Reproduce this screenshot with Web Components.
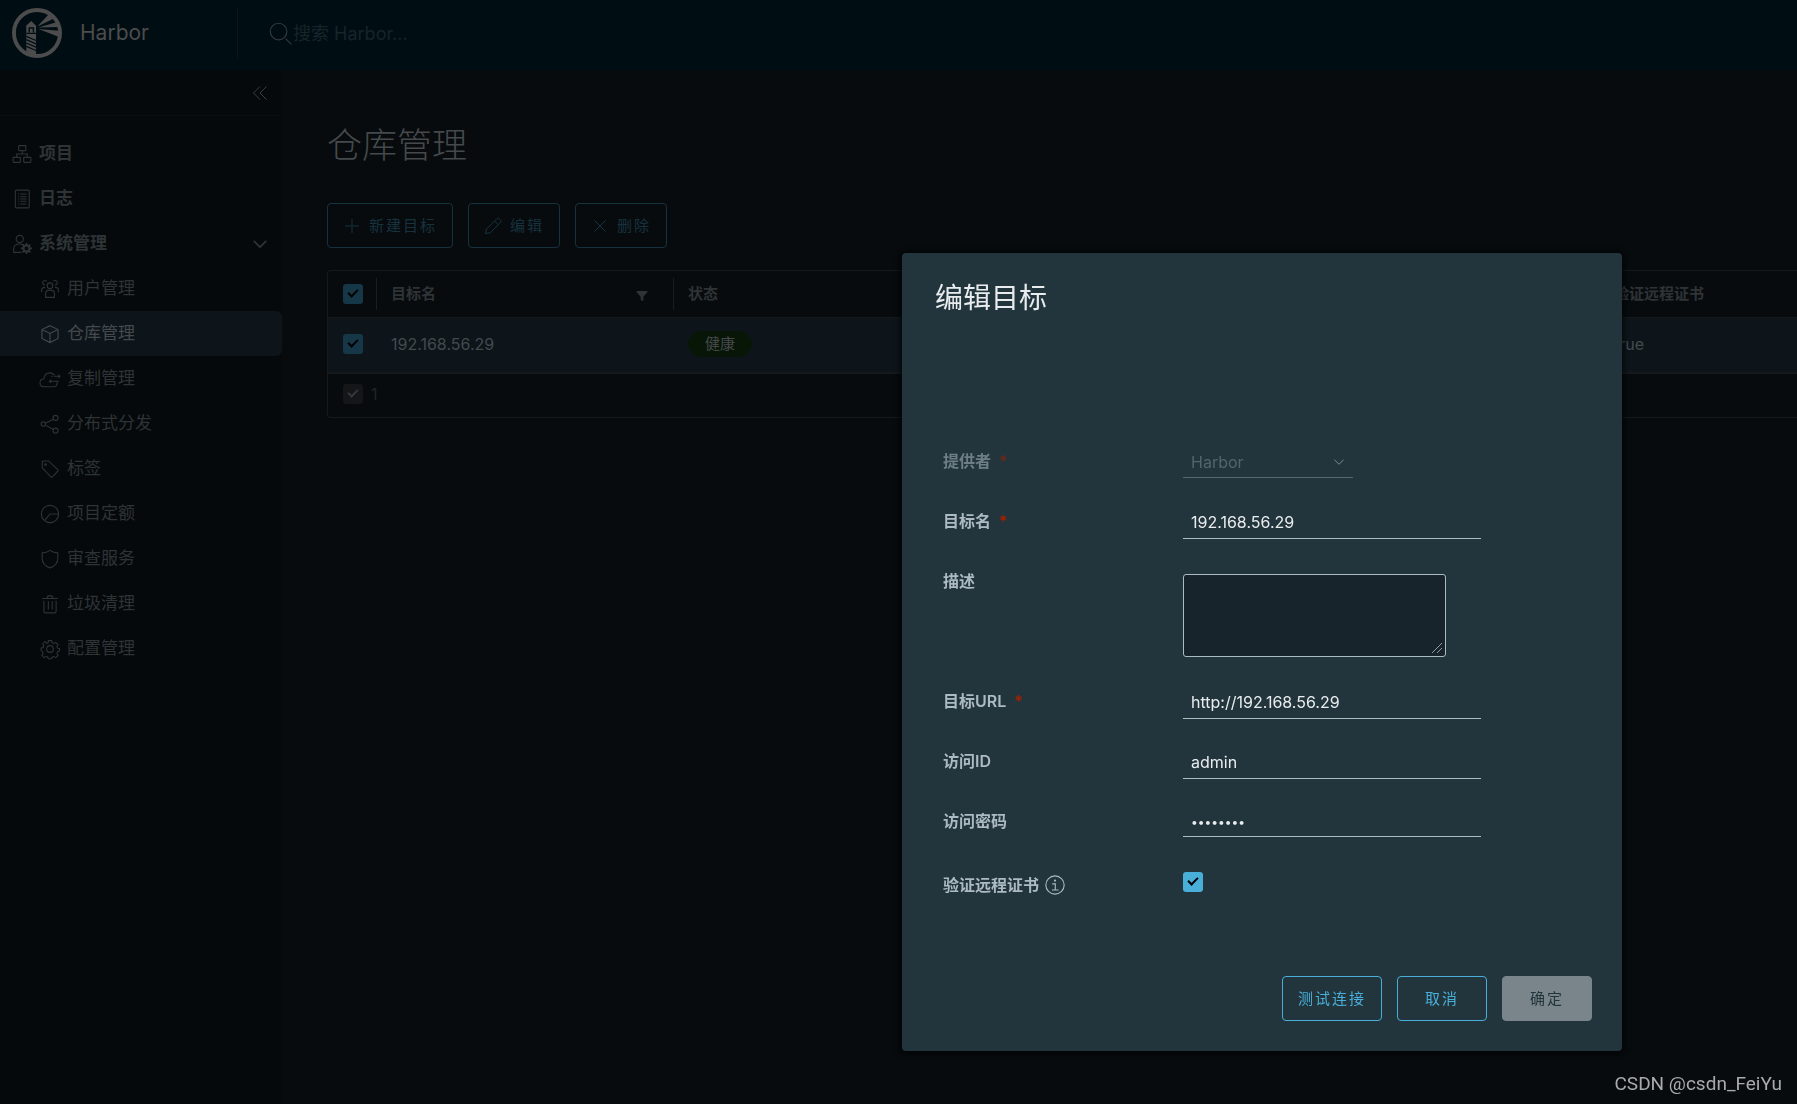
<!DOCTYPE html>
<html lang="zh-CN">
<head>
<meta charset="utf-8">
<title>Harbor</title>
<style>
  html, body { margin: 0; height: 100%; }
  body {
    background: #070b0d;
    color: #45494c;
    font: 400 16px/24px Inter, "Noto Sans CJK SC", sans-serif;
    overflow: hidden;
  }
</style>
</head>
<body>
<harbor-app></harbor-app>
<script>
const ICONS = {
  project: '<rect x="12" y="3" width="13" height="9" rx="1"/><rect x="2" y="24" width="13" height="9" rx="1"/><rect x="21" y="24" width="13" height="9" rx="1"/><path d="M18.500 12v6M8.500 24v-6h19v6"/>',
  log: '<rect x="6" y="2" width="25" height="32" rx="2"/><path d="M11 9h2M15 9h11M11 14h2M15 14h11M11 18h2M15 18h11M11 22h2M15 22h11M11 27h2M15 27h11"/>',
  admin: '<circle cx="14" cy="9" r="6.500"/><path d="M17 33H3v-6c0-6 5-9 11-9 3 0 5 .6 7 1.700"/><circle cx="26" cy="26" r="5.500" stroke-width="4"/><path d="M26 16v4M26 32v4M16 26h4M32 26h4M19 19l3 3M30 30l3 3M33 19l-3 3M19 33l3-3" stroke-width="3"/>',
  users: '<circle cx="18" cy="12" r="5"/><path d="M10 33V26c0-5 3-6 8-6s8 1 8 6v7zM12 4c-4-3-8 0-7 4 .4 2 2 3 4 3M24 4c4-3 8 0 7 4-.4 2-2 3-4 3M3 24v-4c0-3 2-5 6-5M33 24v-4c0-3-2-5-6-5"/>',
  cube: '<path d="M18 3l14.500 7v16L18 33.500 3.500 26V10zM3.500 10L18 17l14.500-7M18 17v16"/>',
  cloud: '<path d="M30 22c1 2 1 4 .5 6-1 3-4 4-7 4H8c-5 0-8-3-8-7 0-5 4-7 7-7 0-7 5-11 10-11 4 0 7 1 9 4"/><path d="M20 13h3M25 13h11M33 10l3 3-3 3M34 22H17M20 19l-3 3 3 3"/>',
  share: '<circle cx="6" cy="18" r="4"/><circle cx="28" cy="7" r="4.500"/><circle cx="28" cy="30" r="4.500"/><path d="M10 16.500L24 9.500M10 20l14 8"/>',
  tag: '<path d="M4 5c0-1 .5-1.500 1.500-1.500h10L32 19c1 1 1 2 0 3L22.500 32c-1 1-2 1-3 0L4 16z"/><circle cx="10" cy="10" r="1.500"/>',
  quota: '<circle cx="18" cy="18" r="15.500"/><path d="M8 30L18 18h15.500"/>',
  shield: '<path d="M18 2.500c4 3 9 4.500 14 4.500v10c0 8-6 14-14 17C10 31 4 25 4 17V7c5 0 10-1.500 14-4.500z"/>',
  trash: '<path d="M4 8h28M13 7c0-3 1-4 5-4s5 1 5 4M7 12v19c0 2 1 3 3 3h16c2 0 3-1 3-3V12M15 13v15M22 13v15"/>',
  gear: '<circle cx="18" cy="18" r="6"/><path d="M15 3h6l1 4 3 1 3.500-2 4 4-2 3.500 1 3 3.500 1v4l-3.500 1.500-1 3 2 3.500-4 4-3.500-2-3 1-1 3h-6l-1-3-3-1-3.500 2-4-4 2-3.500-1-3L2 20.500v-4l4-1.500 1-3-2-3.500 4-4L12.500 8l2-1z"/>',
  plus: '<path d="M18 4v28M4 18h28"/>',
  pencil: '<path d="M3 33l2-9L25 4c2-2 4-2 6 0l1.500 1.500c2 2 2 4 0 6L12.500 31.500zM21 8l7.500 7.500"/>',
  close: '<path d="M7 7l22 22M29 7L7 29"/>',
  search: '<circle cx="15" cy="15" r="13"/><path d="M26 26l9 9"/>',
  collapse: '<path d="M18 5L5 18l13 13M31 5L18 18l13 13"/>',
  chevron: '<path d="M4 11l14 14 14-14"/>',
  filter: '<path d="M2 3h32v4L22 20v14l-8-4V20L2 7z" fill="currentColor" stroke="none"/>',
  info: '<circle cx="18" cy="18" r="16.500"/><path d="M13 16h5.500v11M12.500 27h12"/><circle cx="18" cy="10" r="1" />',
  logo: '<circle cx="18" cy="18" r="16.600" stroke-width="2.800"/><g fill="currentColor" stroke="none"><path d="M9.800 13.200L13.800 9.400l3.900 3.800h-.4v4.800h-7v-4.800zM10.300 18h7V34l-7-1.800z"/><path d="M18.300 13.300L26.600 4.300l3.200 3.400zM19 14L32.600 10l1 3.700zM19 15.200l14.800 1.200-.8 4.200z"/></g><path d="M12.400 17.600v-3.200h3v3.200" stroke="#000e14" stroke-width="1"/><path d="M10.300 20.400l7 3M10.300 22.800l7 3M10.300 25.200l7 3M10.300 27.600l7 3M10.300 18.300h7" stroke="#000e14" stroke-width=".9"/>'
};

function define(name, html, setup) {
  const tpl = document.createElement('template');
  tpl.innerHTML = html;
  customElements.define(name, class extends HTMLElement {
    constructor() {
      super();
      this.attachShadow({ mode: 'open' });
    }
    connectedCallback() {
      if (this.shadowRoot.childNodes.length) return;
      const content = tpl.content.cloneNode(true);
      if (setup) setup(this, content);
      this.shadowRoot.append(content);
    }
  });
}

const CHECKBOX = `
  input[type=checkbox] {
    appearance: none; display: grid; place-content: center; flex: none; box-sizing: border-box;
    width: 20px; height: 20px; margin: 0; border-radius: 3px; padding-bottom: 4px;
    background: var(--check-bg, #163747);
  }
  input[type=checkbox]::before {
    content: ""; width: 4px; height: 8px; rotate: 45deg;
    border: solid var(--check-ink, #000); border-width: 0 2px 2px 0;
  }`;

define('h-icon', `
  <style>
    :host { display: block; flex: none; width: var(--size, 20px); height: var(--size, 20px); }
    svg { display: block; width: 100%; height: 100%; overflow: visible;
      fill: none; stroke: currentColor; stroke-width: var(--stroke, 2); }
  </style>
  <svg viewBox="0 0 36 36" aria-hidden="true"></svg>`,
  (el, root) => { root.querySelector('svg').innerHTML = ICONS[el.getAttribute('name')]; });

define('h-button', `
  <style>
    :host { display: block; }
    button {
      display: flex; align-items: center; justify-content: center; gap: 8px; box-sizing: border-box;
      height: 45px; min-width: 90px; padding: 0 15px; border: 1px solid var(--line, #17323f);
      border-radius: 4px; background: var(--fill, transparent); color: var(--ink, #17323f);
      font: inherit; font-size: 15px; letter-spacing: 2px; white-space: nowrap;
    }
    ::slotted(h-icon) { --size: 18px; }
  </style>
  <button type="button"><slot name="icon"></slot><slot></slot></button>`,
  (el, root) => { root.querySelector('button').disabled = el.hasAttribute('disabled'); });

define('app-header', `
  <style>
    :host { display: flex; align-items: center; height: 70px; background: #000e14; }
    .brand { display: flex; align-items: center; gap: 18px; box-sizing: border-box; width: 238px; height: 50px;
      margin-bottom: 4px; padding-left: 12px; border-right: 1px solid #061820;
      color: #4c4c4c; font-size: 21px; text-decoration: none; }
    .brand h-icon { --size: 50px; }
    label { display: flex; align-items: center; flex: 1; padding-left: 31px; color: #33393c; }
    label h-icon { --size: 23px; --stroke: 1.800; margin-bottom: 4px; }
    input { flex: 1; height: 30px; padding: 0; margin: 0 0 4px 1px; border: 0; outline: 0; background: none;
      font: inherit; font-size: 18px; color: #4c4c4c; }
    input::placeholder { color: #17242b; opacity: 1; }
  </style>
  <a class="brand" href="#"><h-icon name="logo"></h-icon><span>Harbor</span></a>
  <label><h-icon name="search"></h-icon><input type="text" placeholder="搜索 Harbor..."></label>`);

define('nav-item', `
  <style>
    :host { display: block; color: #2e3336; }
    a { display: flex; align-items: center; gap: 7px; height: 45px; padding: 0 14px 0 12px;
      border-radius: 0 6px 6px 0; color: inherit; font-size: 17px; text-decoration: none; }
    .text { padding-bottom: 2px; }
    :host([group]) a { font-weight: 700; }
    :host([sub]) a { padding-left: 40px; }
    :host([active]) { color: #45494c; }
    :host([active]) a { background: #0d151b; }
    ::slotted([slot=end]) { margin-left: auto; --size: 16px; --stroke: 4; }
  </style>
  <a href="#"><h-icon class="icon"></h-icon><span class="text"><slot></slot></span><slot name="end"></slot></a>`,
  (el, root) => { root.querySelector('h-icon').setAttribute('name', el.getAttribute('icon')); });

define('side-nav', `
  <style>
    :host { display: block; flex: none; width: 282px; background: #05090b; }
    .top { display: flex; justify-content: flex-end; align-items: center; height: 45px; padding-right: 13px;
      border-bottom: 1px solid #090d10; }
    button { padding: 0; border: 0; background: none; color: #3a3f42; }
    button h-icon { --size: 18px; }
    nav { padding-top: 15px; }
  </style>
  <div class="top"><button type="button" aria-label="collapse"><h-icon name="collapse"></h-icon></button></div>
  <nav>
    <nav-item group icon="project">项目</nav-item>
    <nav-item group icon="log">日志</nav-item>
    <nav-item group icon="admin">系统管理<h-icon slot="end" name="chevron"></h-icon></nav-item>
    <nav-item sub icon="users">用户管理</nav-item>
    <nav-item sub active icon="cube">仓库管理</nav-item>
    <nav-item sub icon="cloud">复制管理</nav-item>
    <nav-item sub icon="share">分布式分发</nav-item>
    <nav-item sub icon="tag">标签</nav-item>
    <nav-item sub icon="quota">项目定额</nav-item>
    <nav-item sub icon="shield">审查服务</nav-item>
    <nav-item sub icon="trash">垃圾清理</nav-item>
    <nav-item sub icon="gear">配置管理</nav-item>
  </nav>`);

define('registry-table', `
  <style>
    :host { display: block; border: 1px solid #15191b; border-right: 0; border-radius: 4px 0 0 4px; overflow: hidden; }
    table { width: 100%; table-layout: fixed; border-collapse: separate; border-spacing: 0; }
    th, td { box-sizing: border-box; padding: 0; text-align: left; vertical-align: middle; }
    th { height: 47px; font-size: 15px; font-weight: 600; color: #2e3336; border-bottom: 1px solid #15191b; }
    th > div { display: flex; align-items: center; justify-content: space-between; height: 32px;
      padding: 0 25px 0 14px; border-left: 1px solid #191d1f; }
    th:first-child > div { padding: 0 0 0 15px; border: 0; }
    th h-icon { --size: 12px; margin-top: 4px; }
    tbody td { height: 56px; padding: 0 0 2px 15px; background: #0d151b; border-bottom: 2px solid #15191b; }
    tfoot td { height: 43px; padding: 0 0 4px 15px; }
    .total { display: flex; align-items: center; gap: 8px; color: #202426;
      --check-bg: #141617; --check-ink: #33373a; }
    .badge { display: inline-block; padding: 0 17px; border-radius: 13px; background: #081607;
      font-size: 15px; line-height: 26px; }
    .pick { width: 48px; } .name { width: 297px; } .cert { width: 198px; }
    ${CHECKBOX}
  </style>
  <table>
    <colgroup><col class="pick"><col class="name"><col><col class="cert"></colgroup>
    <thead><tr>
      <th><div><input type="checkbox" checked aria-label="all"></div></th>
      <th><div>目标名<h-icon name="filter"></h-icon></div></th>
      <th><div>状态</div></th>
      <th><div>验证远程证书</div></th>
    </tr></thead>
    <tbody><tr>
      <td><input type="checkbox" checked aria-label="row"></td>
      <td>192.168.56.29</td>
      <td><span class="badge">健康</span></td>
      <td>true</td>
    </tr></tbody>
    <tfoot><tr><td colspan="4"><label class="total"><input type="checkbox" checked disabled>1</label></td></tr></tfoot>
  </table>`);

define('registry-page', `
  <style>
    :host { display: block; flex: 1; min-width: 0; padding: 50px 0 0 45px; }
    h1 { margin: 0; font-size: 35px; font-weight: 300; line-height: 50px; }
    .actions { display: flex; gap: 15px; margin: 33px 0 22px; }
  </style>
  <h1>仓库管理</h1>
  <div class="actions">
    <h-button><h-icon slot="icon" name="plus"></h-icon>新建目标</h-button>
    <h-button><h-icon slot="icon" name="pencil"></h-icon>编辑</h-button>
    <h-button><h-icon slot="icon" name="close"></h-icon>删除</h-button>
  </div>
  <registry-table></registry-table>`);

define('form-field', `
  <style>
    :host { display: grid; grid-template-columns: 240px 1fr; align-items: start; min-height: 33px; }
    label { display: flex; align-items: center; gap: 6px; line-height: 30px; font-weight: 600; color: #acbac3; }
    .star { color: #a32100; padding-left: 2px; }
    .control { display: flex; align-items: center; box-sizing: border-box; width: 298px; }
    input:not([type=checkbox]), select {
      appearance: none; box-sizing: border-box; width: 100%; height: 33px; padding: 0 8px; border: 0;
      border-bottom: 1px solid #acbac3; border-radius: 0; outline: 0; background: none;
      color: #e9ecef; font: inherit; opacity: 1;
    }
    input[type=password] { height: 31px; font-size: 12px; }
    textarea { box-sizing: border-box; width: 263px; height: 83px; margin: 8px 0 2px; border: 1px solid #acbac3;
      border-radius: 3px; background: #17242b; color: #e9ecef; }
    textarea::-webkit-resizer {
      background: linear-gradient(135deg, transparent 46%, #8d9aa2 46% 54%, transparent 54% 72%, #8d9aa2 72% 80%, transparent 80%) 2px 2px / 10px 10px no-repeat;
    }
    .control h-icon { --size: 12px; --stroke: 3; margin-left: -20px; color: #7d8a91; pointer-events: none; }
    :host([kind=select]) .control { width: 170px; }
    :host([kind=select]) label { opacity: .55; }
    :host([kind=select]) select { height: 32px; color: #55646c; border-color: #566770; }
    :host([kind=checkbox]) .control { padding-top: 2px; --check-bg: #49afd9; }
    ${CHECKBOX}
  </style>
  <label for="control"><span class="text"></span><slot></slot></label>
  <div class="control"></div>`,
  (el, root) => {
    const kind = el.getAttribute('kind') || 'text';
    const value = el.getAttribute('value') || '';
    root.querySelector('.text').textContent = el.getAttribute('label');
    if (el.hasAttribute('required')) {
      const star = document.createElement('span');
      star.className = 'star';
      star.textContent = '*';
      root.querySelector('label').append(star);
    }
    const box = root.querySelector('.control');
    let control;
    if (kind === 'select') {
      control = document.createElement('select');
      control.add(new Option(value));
      control.disabled = true;
    } else if (kind === 'textarea') {
      control = document.createElement('textarea');
    } else {
      control = document.createElement('input');
      control.type = kind;
      if (kind === 'checkbox') control.checked = true;
      else control.value = value;
    }
    control.id = 'control';
    box.append(control);
    if (kind === 'select') {
      const arrow = document.createElement('h-icon');
      arrow.setAttribute('name', 'chevron');
      box.append(arrow);
    }
  });

define('edit-dialog', `
  <style>
    :host { position: fixed; inset: 0; display: flex; justify-content: flex-end; align-items: flex-start;
      padding: 253px 175px 0 0; }
    section { box-sizing: border-box; width: 720px; padding: 30px; border-radius: 4px; background: #22343c;
      box-shadow: 0 1px 4px 3px rgba(0, 0, 0, .5); }
    h2 { margin: 0 3px; font-size: 28px; font-weight: 400; line-height: 30px; color: #e9ecef; }
    form { display: flex; flex-direction: column; gap: 27px; padding: 133px 11px 73px; }
    form-field:last-child { margin-top: 4px; }
    form-field h-icon { color: #acbac3; }
    footer { display: flex; justify-content: flex-end; gap: 15px; }
    h-button { --line: #49afd9; --ink: #49afd9; }
    h-button[disabled] { --line: #79858a; --fill: #79858a; --ink: #22343c; }
  </style>
  <section role="dialog" aria-labelledby="title">
    <h2 id="title">编辑目标</h2>
    <form>
      <form-field kind="select" label="提供者" value="Harbor" required></form-field>
      <form-field label="目标名" value="192.168.56.29" required></form-field>
      <form-field kind="textarea" label="描述"></form-field>
      <form-field label="目标URL" value="http://192.168.56.29" required></form-field>
      <form-field label="访问ID" value="admin"></form-field>
      <form-field kind="password" label="访问密码" value="Harbor12"></form-field>
      <form-field kind="checkbox" label="验证远程证书"><h-icon name="info"></h-icon></form-field>
    </form>
    <footer>
      <h-button>测试连接</h-button>
      <h-button>取消</h-button>
      <h-button disabled>确定</h-button>
    </footer>
  </section>`);

define('page-credit', `
  <style>
    :host { position: fixed; right: 15px; bottom: 8px; color: #a8aaab; font: 19px/24px Roboto, sans-serif; }
  </style>
  <slot></slot>`);

define('harbor-app', `
  <style>
    :host { display: flex; flex-direction: column; height: 100vh; }
    .body { display: flex; flex: 1; min-height: 0; }
  </style>
  <app-header></app-header>
  <div class="body"><side-nav></side-nav><registry-page></registry-page></div>
  <edit-dialog></edit-dialog>
  <page-credit>CSDN @csdn_FeiYu</page-credit>`);
</script>
</body>
</html>
